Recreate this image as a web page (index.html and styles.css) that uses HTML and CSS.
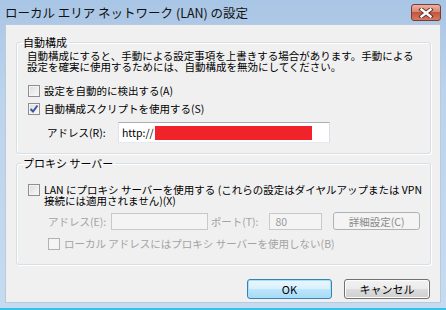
FILE: index.html
```html
<!DOCTYPE html>
<html lang="ja">
<head>
<meta charset="utf-8">
<title>ローカル エリア ネットワーク (LAN) の設定</title>
<link rel="stylesheet" href="styles.css">
</head>
<body>
<div class="window">
  <div class="titlebar">
    <span class="title">ローカル エリア ネットワーク (LAN) の設定</span>
    <div class="close">
      <svg width="16" height="10" viewBox="0 0 16 10">
        <path d="M3.5 1.5 L12.5 8.5 M12.5 1.5 L3.5 8.5" stroke="#5a2a22" stroke-width="4.2" stroke-linecap="square"/>
        <path d="M3.5 1.5 L12.5 8.5 M12.5 1.5 L3.5 8.5" stroke="#ffffff" stroke-width="2.4" stroke-linecap="square"/>
      </svg>
    </div>
  </div>
  <div class="client">
    <fieldset class="group g1">
      <legend>自動構成</legend>
      <p class="desc">自動構成にすると、手動による設定事項を上書きする場合があります。手動による<br>設定を確実に使用するためには、自動構成を無効にしてください。</p>
      <label class="check cb1"><span class="box"></span><span>設定を自動的に検出する(A)</span></label>
      <label class="check cb2"><span class="box"><svg width="10" height="10" viewBox="0 0 10 10"><path d="M1.5 5 L4 7.5 L8.5 1.5" fill="none" stroke="#3a56a0" stroke-width="2"/></svg></span><span>自動構成スクリプトを使用する(S)</span></label>
      <div class="addr-row">
        <span class="addr-label">アドレス(R):</span>
        <div class="input url"><span>http://</span><span class="redact"></span></div>
      </div>
    </fieldset>
    <fieldset class="group g2">
      <legend>プロキシ サーバー</legend>
      <label class="check multi"><span class="box"></span><span>LAN にプロキシ サーバーを使用する (これらの設定はダイヤルアップまたは VPN<br>接続には適用されません)(X)</span></label>
      <div class="proxy-row">
        <span class="addr-label dis">アドレス(E):</span>
        <div class="input dis-input proxy-addr"></div>
        <span class="port-label dis">ポート(T):</span>
        <div class="input dis-input port">80</div>
        <div class="btn dis-btn">詳細設定(C)</div>
      </div>
      <label class="check local"><span class="box dis-box"></span><span class="dis">ローカル アドレスにはプロキシ サーバーを使用しない(B)</span></label>
    </fieldset>
    <div class="buttons">
      <div class="btn ok">OK</div>
      <div class="btn cancel">キャンセル</div>
    </div>
  </div>
</div>
</body>
</html>
```

FILE: styles.css
```css
html, body {
  margin: 0;
  padding: 0;
}
body {
  width: 446px;
  height: 310px;
  overflow: hidden;
  font-family: "Noto Sans CJK JP", "Noto Sans", sans-serif;
  font-size: 10.5px;
  color: #000;
}
.window {
  width: 446px;
  height: 310px;
  box-sizing: border-box;
  padding: 0 5px 5px 5px;
  display: flex;
  flex-direction: column;
  background: linear-gradient(#a9c5e5, #bcd3ec 30%, #c7dbf0);
  border-bottom: 2px solid #33c3e6;
}
.titlebar {
  height: 24px;
  flex: none;
  display: flex;
  align-items: center;
  justify-content: space-between;
}
.title {
  font-size: 12.5px;
  line-height: 14px;
  padding-top: 2px;
  color: #111;
}
.close {
  width: 30px;
  height: 17px;
  box-sizing: border-box;
  border: 1px solid #7b3b30;
  border-radius: 3px;
  background: linear-gradient(#eab3a6, #d88673 45%, #c2553d 50%, #d67a62);
  display: flex;
  align-items: center;
  justify-content: center;
  margin-top: 1px;
}
.client {
  flex: 1;
  background: #f0f0f0;
  box-shadow: inset 0 0 0 1px #b9cadf;
  padding: 12px 10px 0 11px;
  display: flex;
  flex-direction: column;
}
.group {
  margin: 0;
  padding: 0 10px;
  border: 1px solid #d5dfe5;
  border-radius: 3px;
  box-shadow: inset 1px 1px 0 #fff, 1px 1px 0 #fff;
  min-inline-size: 0;
}
.group legend {
  margin-left: -6px;
  padding: 0 2px;
  font-size: 11px;
  line-height: 12px;
}
.desc {
  margin: 2px 0 0 0;
  line-height: 11px;
  white-space: nowrap;
}
.check {
  display: flex;
  align-items: center;
  gap: 4px;
  line-height: 14px;
  height: 14px;
  white-space: nowrap;
}
.box {
  width: 12px;
  height: 12px;
  box-sizing: border-box;
  border: 1px solid #8e8f8f;
  background: linear-gradient(135deg, #dcdcdc, #fafafa);
  box-shadow: inset 0 0 0 1px #f4f4f4;
  margin-left: 1px;
  flex: none;
  display: flex;
  align-items: center;
  justify-content: center;
}
.cb1 { margin-top: 12px; }
.cb2 { margin-top: 4px; }
.addr-row {
  display: flex;
  align-items: center;
  margin-top: 6px;
  padding-bottom: 10px;
  padding-left: 20px;
}
.addr-label {
  width: 71px;
  flex: none;
  white-space: nowrap;
}
.input {
  box-sizing: border-box;
  border: 1px solid #abadb3;
  border-color: #abadb3 #dbdfe6 #e3e9ef #e2e3ea;
  background: #fff;
  display: flex;
  align-items: center;
  padding-left: 3px;
  font-size: 10.5px;
}
.url {
  width: 212px;
  height: 21px;
}
.redact {
  display: block;
  width: 157px;
  height: 14px;
  background: #f0232a;
  margin-left: 1px;
}
.g2 {
  margin-top: 3px;
}
.multi {
  margin-top: 15px;
  height: auto;
  align-items: flex-start;
  line-height: 11px;
}
.multi .box {
  margin-top: 0;
}
.proxy-row {
  display: flex;
  align-items: center;
  margin-top: 6px;
  padding-left: 21px;
  height: 18px;
}
.proxy-row .addr-label {
  width: 63px;
}
.dis {
  color: #a3a3a3;
}
.dis-input {
  border: 1px solid #c9c9c9;
  background: #f4f4f4;
  color: #9a9a9a;
  height: 17px;
}
.proxy-addr {
  width: 97px;
}
.port-label {
  width: 62px;
  padding-left: 3px;
  box-sizing: border-box;
  white-space: nowrap;
}
.port {
  width: 53px;
  padding-left: 5px;
}
.btn {
  box-sizing: border-box;
  display: flex;
  align-items: center;
  justify-content: center;
  border-radius: 3px;
  white-space: nowrap;
}
.dis-btn {
  margin-left: 11px;
  width: 87px;
  height: 18px;
  border: 1px solid #adb2b5;
  background: #f4f4f4;
  color: #8a8a8a;
}
.local {
  margin-top: 7px;
  padding-left: 20px;
  margin-bottom: 13px;
}
.dis-box {
  border-color: #b1b1b1;
  background: #f4f4f4;
  box-shadow: none;
}
.buttons {
  display: flex;
  justify-content: flex-end;
  gap: 12px;
  margin-top: 14px;
  padding-right: 1px;
}
.ok, .cancel {
  height: 20px;
  font-size: 11px;
}
.ok {
  width: 85px;
  border: 1px solid #3c7fb1;
  background: linear-gradient(#eaf6fd, #d9f0fc 50%, #bee6fd 50%, #a7d9f5);
  box-shadow: inset 0 0 0 1px #9fe4fb;
}
.cancel {
  width: 86px;
  border: 1px solid #707070;
  background: linear-gradient(#f2f2f2, #ebebeb 50%, #dddddd 50%, #cfcfcf);
  box-shadow: inset 0 0 0 1px #fcfcfc;
}
```
